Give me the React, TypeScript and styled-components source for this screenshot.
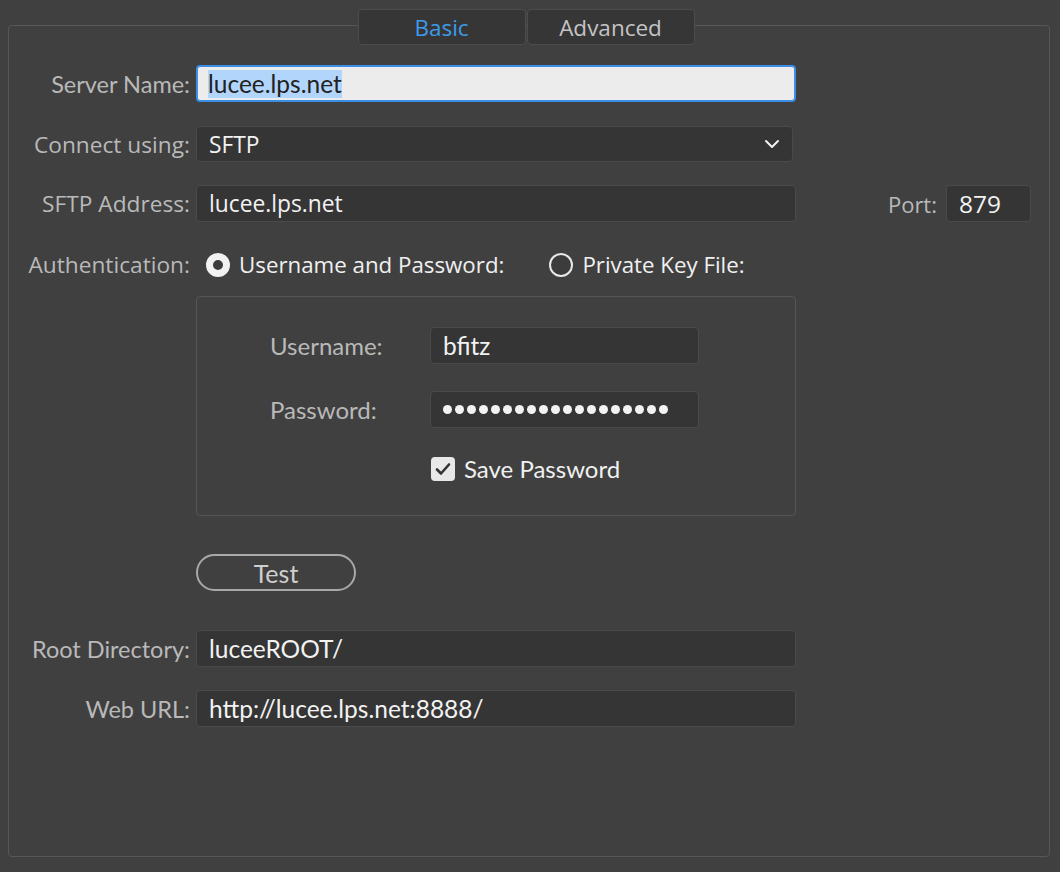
import React from "react";
import styled, { createGlobalStyle } from "styled-components";

const Global = createGlobalStyle`
  html, body { margin: 0; padding: 0; background: #404040; }
  body { font-family: "Open Sans", "Noto Sans", sans-serif; }
  * { box-sizing: border-box; }
`;

const lucida = `"Open Sans", "Noto Sans", "DejaVu Sans", sans-serif`;
const myriad = `"Lato", "Noto Sans", sans-serif`;

const Page = styled.div`
  width: 1060px;
  height: 872px;
  background: #404040;
  padding: 9px 10px 0 8px;
  display: flex;
  flex-direction: column;
`;

const TabRow = styled.div`
  display: flex;
  justify-content: center;
  padding-right: 6px;
  margin-bottom: -20px;
  position: relative;
  z-index: 1;
`;

const Tab = styled.div<{ $active?: boolean }>`
  width: 168px;
  height: 36px;
  display: flex;
  align-items: center;
  justify-content: center;
  background: #363636;
  border: 1px solid #4c4c4c;
  border-radius: 4px;
  font-family: ${lucida};
  font-size: 22.5px;
  color: ${(p) => (p.$active ? "#3d9be9" : "#c4c4c4")};
  & + & { margin-left: 1px; }
`;

const Panel = styled.div`
  height: 832px;
  border: 1.5px solid #575757;
  border-radius: 4px;
  padding: 39px 18px 0 0;
  display: flex;
  flex-direction: column;
`;

const Row = styled.div<{ $top?: number }>`
  display: flex;
  align-items: center;
  margin-top: ${(p) => p.$top ?? 0}px;
`;

const Label = styled.div<{ $narrow?: boolean }>`
  width: 181px;
  margin-right: 6px;
  text-align: right;
  color: #b9b9b9;
  white-space: nowrap;
  font-family: ${(p) => (p.$narrow ? myriad : lucida)};
  font-size: ${(p) => (p.$narrow ? "23.5px" : "22.7px")};
`;

const Box = styled.div<{ $width?: number; $focus?: boolean; $narrow?: boolean }>`
  width: ${(p) => p.$width ?? 600}px;
  height: 37px;
  display: flex;
  align-items: center;
  padding: 0 12px;
  border-radius: 4px;
  background: ${(p) => (p.$focus ? "#ececec" : "#353535")};
  border: ${(p) => (p.$focus ? "2px solid #3a8ee6" : "1.5px solid #4a4a4a")};
  color: ${(p) => (p.$focus ? "#222" : "#f2f2f2")};
  font-family: ${(p) => (p.$narrow ? myriad : lucida)};
  font-size: ${(p) => (p.$narrow ? "24.5px" : "22.8px")};
  white-space: nowrap;
`;

const Selected = styled.span`
  background: #b2d5fc;
  margin-left: -2px;
  line-height: 28px;
`;

const SelectBox = styled(Box)`
  justify-content: space-between;
  height: 36px;
  padding-right: 12px;
`;

const PortGroup = styled.div`
  margin-left: auto;
  display: flex;
  align-items: center;
  gap: 9px;
`;

const PortLabel = styled.span`
  color: #b9b9b9;
  font-family: ${lucida};
  font-size: 22px;
`;

const PortBox = styled(Box)`
  font-size: 24.5px;
`;

const RadioGroup = styled.div`
  display: flex;
  align-items: center;
  margin-left: 10px;
`;

const RadioOption = styled.div`
  display: flex;
  align-items: center;
  gap: 9px;
  color: #f0f0f0;
  font-family: ${lucida};
  font-size: 22.3px;
  & + & { margin-left: 45px; }
`;

const RadioDot = styled.span<{ $on?: boolean }>`
  width: 24px;
  height: 24px;
  border-radius: 50%;
  flex: none;
  border: ${(p) => (p.$on ? "7px solid #f2f2f2" : "2px solid #e8e8e8")};
  background: #3c3c3c;
`;

const Group = styled.div`
  margin-left: 187px;
  margin-top: 16px;
  width: 600px;
  height: 220px;
  border: 1.5px solid #555;
  border-radius: 4px;
  padding: 30px 0 0 73px;
  display: flex;
  flex-direction: column;
`;

const GroupRow = styled.div<{ $top?: number }>`
  display: flex;
  align-items: center;
  margin-top: ${(p) => p.$top ?? 0}px;
`;

const GroupLabel = styled.div`
  width: 160px;
  color: #b9b9b9;
  font-family: ${myriad};
  font-size: 24px;
`;

const Dots = styled.div`
  display: flex;
  gap: 3px;
`;

const Dot = styled.span`
  width: 9px;
  height: 9px;
  border-radius: 50%;
  background: #f2f2f2;
`;

const Check = styled.div`
  display: flex;
  align-items: center;
  gap: 9px;
  margin-left: 161px;
  color: #f0f0f0;
  font-family: ${myriad};
  font-size: 24px;
`;

const CheckBox = styled.span`
  width: 24px;
  height: 24px;
  border-radius: 4px;
  background: #e8e8e8;
  display: flex;
  align-items: center;
  justify-content: center;
`;

const Button = styled.div`
  margin-left: 187px;
  margin-top: 38px;
  width: 160px;
  height: 37px;
  border: 2px solid #a9a9a9;
  border-radius: 19px;
  display: flex;
  align-items: center;
  justify-content: center;
  color: #cfcfcf;
  font-family: ${myriad};
  font-size: 25px;
`;

export default function App() {
  return (
    <>
      <Global />
      <Page>
        <TabRow>
          <Tab $active>Basic</Tab>
          <Tab>Advanced</Tab>
        </TabRow>
        <Panel>
          <Row>
            <Label $narrow>Server Name:</Label>
            <Box $focus $narrow>
              <Selected>lucee.lps.net</Selected>
            </Box>
          </Row>
          <Row $top={24}>
            <Label>Connect using:</Label>
            <SelectBox $width={597}>
              <span>SFTP</span>
              <svg width="16" height="10" viewBox="0 0 16 10">
                <path d="M2 2 L8 8 L14 2" fill="none" stroke="#f2f2f2" strokeWidth="2" strokeLinecap="round" strokeLinejoin="round" />
              </svg>
            </SelectBox>
          </Row>
          <Row $top={23}>
            <Label>SFTP Address:</Label>
            <Box>lucee.lps.net</Box>
            <PortGroup>
              <PortLabel>Port:</PortLabel>
              <PortBox $width={85}>879</PortBox>
            </PortGroup>
          </Row>
          <Row $top={27}>
            <Label>Authentication:</Label>
            <RadioGroup>
              <RadioOption>
                <RadioDot $on />
                Username and Password:
              </RadioOption>
              <RadioOption>
                <RadioDot />
                Private Key File:
              </RadioOption>
            </RadioGroup>
          </Row>
          <Group>
            <GroupRow>
              <GroupLabel>Username:</GroupLabel>
              <Box $width={269} $narrow>bfitz</Box>
            </GroupRow>
            <GroupRow $top={27}>
              <GroupLabel>Password:</GroupLabel>
              <Box $width={269}>
                <Dots>
                  {Array.from({ length: 19 }).map((_, i) => (
                    <Dot key={i} />
                  ))}
                </Dots>
              </Box>
            </GroupRow>
            <GroupRow $top={26}>
              <Check>
                <CheckBox>
                  <svg width="16" height="14" viewBox="0 0 16 14">
                    <path d="M2 7.5 L6 11.5 L14 2.5" fill="none" stroke="#333" strokeWidth="2.6" strokeLinecap="round" strokeLinejoin="round" />
                  </svg>
                </CheckBox>
                Save Password
              </Check>
            </GroupRow>
          </Group>
          <Button>Test</Button>
          <Row $top={39}>
            <Label $narrow>Root Directory:</Label>
            <Box $narrow>luceeROOT/</Box>
          </Row>
          <Row $top={23}>
            <Label $narrow>Web URL:</Label>
            <Box $narrow>http://lucee.lps.net:8888/</Box>
          </Row>
        </Panel>
      </Page>
    </>
  );
}
